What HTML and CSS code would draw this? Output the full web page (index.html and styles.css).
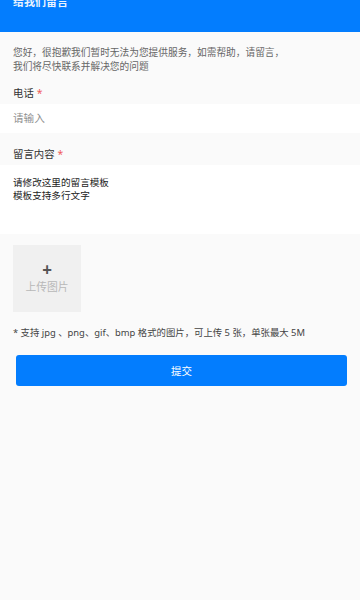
FILE: index.html
```html
<!DOCTYPE html>
<html lang="zh-CN">
<head>
<meta charset="utf-8">
<link rel="stylesheet" href="styles.css">
</head>
<body>
<div class="page">
  <header class="topbar"><h1 class="title">给我们留言</h1></header>
  <p class="intro">您好，很抱歉我们暂时无法为您提供服务，如需帮助，请留言，<br>我们将尽快联系并解决您的问题</p>
  <div class="label">电话<span class="star">*</span></div>
  <div class="input">请输入</div>
  <div class="label label-2">留言内容<span class="star">*</span></div>
  <div class="textarea">请修改这里的留言模板<br>模板支持多行文字</div>
  <div class="upload-area">
    <div class="upload-box">
      <span class="plus">+</span>
      <span class="upload-text">上传图片</span>
    </div>
  </div>
  <p class="note">* 支持 jpg 、png、gif、bmp 格式的图片，可上传 5 张，单张最大 5M</p>
  <div class="actions"><button class="submit">提交</button></div>
</div>
</body>
</html>
```
FILE: styles.css
```css
html, body {
  margin: 0;
  padding: 0;
  background: #fafafa;
}
body {
  font-family: "Noto Sans", "Noto Sans CJK SC", sans-serif;
  color: #333;
}
.page {
  width: 360px;
  min-height: 600px;
  background: #fafafa;
  overflow: hidden;
}
.topbar {
  display: flow-root;
  height: 32px;
  background: #037dfe;
  padding: 0 13px;
  box-sizing: border-box;
}
.title {
  margin: -8px 0 0;
  font-size: 11px;
  line-height: 20px;
  font-weight: bold;
  color: #eaf3ff;
}
.intro {
  margin: 0;
  padding: 14px 13px 0;
  font-size: 9.7px;
  line-height: 14px;
  color: #666;
}
.label {
  padding: 12px 13px 4px;
  font-size: 10.4px;
  line-height: 14px;
  color: #333;
}
.label-2 {
  padding-top: 14px;
}
.star {
  color: #f05a5a;
  margin-left: 3px;
}
.input {
  height: 29px;
  background: #fff;
  padding: 0 13px;
  font-size: 10.6px;
  line-height: 29px;
  color: #8f8f8f;
}
.textarea {
  height: 69px;
  box-sizing: border-box;
  background: #fff;
  padding: 11px 13px 0;
  font-size: 9.6px;
  line-height: 13px;
  color: #222;
}
.upload-area {
  padding: 11px 13px 0;
}
.upload-box {
  width: 68px;
  height: 67px;
  background: #f0f0f0;
  display: flex;
  flex-direction: column;
  align-items: center;
  justify-content: center;
}
.plus {
  font-size: 17px;
  line-height: 17px;
  font-weight: bold;
  color: #555;
}
.upload-text {
  font-size: 10.8px;
  line-height: 18px;
  color: #b8b8b8;
}
.note {
  margin: 0;
  padding: 14px 13px 0;
  font-size: 9.4px;
  line-height: 14px;
  color: #444;
  white-space: nowrap;
}
.actions {
  padding: 15px 13px 0 16px;
}
.submit {
  display: block;
  width: 331px;
  height: 31px;
  border: 0;
  border-radius: 3px;
  background: #037dfe;
  color: #fff;
  font-family: inherit;
  font-size: 10.5px;
  padding: 0;
}
```
